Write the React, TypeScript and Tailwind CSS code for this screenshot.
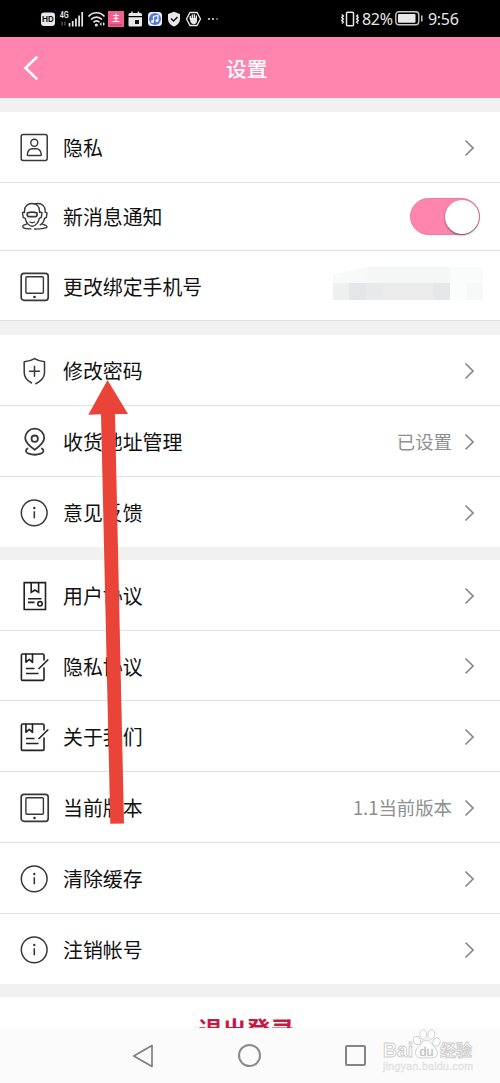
import type { ReactNode } from "react";

function Icon({ children }: { children: ReactNode }) {
  return (
    <svg
      viewBox="0 0 30 30"
      className="h-[30px] w-[30px] shrink-0 overflow-visible"
      fill="none"
      stroke="#383838"
      strokeWidth="1.4"
      strokeLinecap="round"
      strokeLinejoin="round"
    >
      {children}
    </svg>
  );
}

const PersonIcon = () => (
  <Icon>
    <rect x="2.2" y="2.6" width="26" height="26" rx="2" strokeWidth="1.5" />
    <circle cx="15.3" cy="10.8" r="3.5" />
    <path d="M9 23.5c-.6 0-.8-.4-.7-1 .5-3.300 2.500-5.700 5-5.700h4c2.500 0 4.500 2.400 5 5.700 .1.600-.1 1-.7 1z" />
  </Icon>
);

const FacesIcon = () => (
  <Icon>
    <g strokeWidth="1.4">
      <path d="M5.500 10.500V9C5.500 4.500 8.500 1.500 13 1.500S20.500 4.500 20.500 9v1.500" />
      <path d="M5.500 10 3.500 10.700 4.200 15.300 6.200 16.300C7 20.500 10 24.300 13.200 24.300S19.500 20.500 20.300 16.300L22.300 15.300 23 10.700 20.700 10" />
      <path d="M8.300 11c3-1.200 6.700-1.200 9.700 0v2c0 1-.7 1.600-1.700 1.600h-6.200c-1 0-1.800-.6-1.800-1.600z" strokeWidth="1.700" />
      <path d="M11 20c1.300.8 3.200.8 4.500 0" />
      <path d="M15.500 1.800c1-.3 2.200-.3 3.200-.3 4.500 0 7.500 3 7.500 7.500v1.300l1.800.6-.6 4.500-1.900 1c-.5 3-1.800 5.200-4.300 6.500" />
      <path d="M8 21.800l-3.200 1.300c-1 .5-1.300 1.700-.7 2.500 1.500 1 4 1.300 7.800 1.300" />
      <path d="M15.500 27c5 .3 9-.3 12.200-1.300.4-1-.2-2-1-2.300l-3.200-1.200" />
    </g>
  </Icon>
);

const TabletIcon = () => (
  <Icon>
    <rect x="2.200" y="2.300" width="27" height="27" rx="2.800" strokeWidth="1.700" />
    <rect x="6.900" y="5.800" width="17.500" height="16.400" rx="1" />
    <circle cx="15.500" cy="26" r="1.300" fill="#333" stroke="none" />
  </Icon>
);

const ShieldIcon = () => (
  <Icon>
    <path d="M12.500 28C7.500 25.200 5.200 22 5.200 17.500V6.800C9 6.500 12.500 5.500 15.600 3.600 18.700 5.500 22 6.500 25.500 6.800V17.500c0 4.700-3 8.500-8.700 11.200" strokeWidth="1.500" />
    <path d="M15.500 11.300v10M10.500 16.300h10" strokeWidth="1.500" />
  </Icon>
);

const PinIcon = () => (
  <Icon>
    <g strokeWidth="1.800">
      <path d="M15.700 23.800C10 19.700 6.200 16.500 6.200 12a9.500 9.300 0 0 1 19 0c0 4.500-3.800 7.700-9.500 11.800z" />
      <circle cx="15.700" cy="12.700" r="3.200" />
      <path d="M8.500 22.500c-2.500 1.800-2 4.200 1.200 5.200 3.600 1.200 8.600 1.200 12 0 3.200-1 3.700-3.400 1.200-5.200" />
    </g>
  </Icon>
);

const InfoIcon = () => (
  <Icon>
    <circle cx="15.200" cy="15.800" r="12.900" strokeWidth="1.500" />
    <path d="M15.300 14.300v7" strokeWidth="1.600" strokeLinecap="butt" />
    <circle cx="15.300" cy="11" r="1.200" fill="#383838" stroke="none" />
  </Icon>
);

const CertificateIcon = () => (
  <Icon>
    <g stroke="#222" strokeLinejoin="miter" strokeLinecap="butt" strokeWidth="1.600">
      <path d="M5.200 2.600h21.300v26.900H5.200z" />
      <path d="M12.200 2.600v9.800l3.700-2.400 3.700 2.400V2.600" />
      <path d="M9 18.800h13.500M9 22.400h6.500" />
      <circle cx="21" cy="23.800" r="2.200" />
    </g>
  </Icon>
);

const ContractIcon = () => (
  <Icon>
    <g stroke="#222" strokeWidth="1.600">
      <path d="M25 17v11.200a1.200 1.200 0 0 1-1.200 1.200H3.600a1.200 1.200 0 0 1-1.200-1.200V4.200A1.200 1.200 0 0 1 3.600 3h20.200A1.200 1.200 0 0 1 25 4.200V9" />
      <path d="M6.900 3v8.300l3.300-3 3.300 3V3" />
      <path d="M7 17.500h8.500M7 22.500h12.500M29.300 8.500 19.500 18" strokeLinecap="butt" />
    </g>
  </Icon>
);

const Chevron = () => (
  <svg viewBox="0 0 10 18" className="h-[18px] w-[10px] shrink-0" fill="none" stroke="#8a8a8a" strokeWidth="1.700">
    <path d="M1.500 1.500 9 9 1.500 16.500" />
  </svg>
);

const Toggle = () => (
  <div className="mr-5 flex h-[37px] w-[70px] items-center justify-end rounded-full border border-[#ee7ba4] bg-[#ff84ae]">
    <div className="h-[34px] w-[34px] rounded-full bg-white shadow-[0_1px_2px_rgba(80,30,50,0.7)]" />
  </div>
);

const MaskedNumber = () => (
  <div className="mr-[17px] flex flex-col pb-1">
    <div className="flex h-4">
      <div className="w-[34px] bg-[#f8f9f9] [clip-path:polygon(0_45%,100%_0,100%_100%,0_100%)]" />
      <div className="w-[83px] bg-[#f5f6f6]" />
      <div className="w-[33px] bg-[#fafbfb]" />
    </div>
    <div className="flex h-[17px]">
      <div className="w-4 bg-[#eeefef]" />
      <div className="w-[17px] bg-[#e5e6e8]" />
      <div className="w-[17px] bg-[#e8e9ea]" />
      <div className="w-[50px] bg-[#ebebec]" />
      <div className="w-[17px] bg-[#e6e7e9]" />
      <div className="w-[17px] bg-[#fbfcfc]" />
      <div className="w-4 bg-[#f7f8f8]" />
    </div>
  </div>
);

function Row({
  icon,
  label,
  value,
  children,
  size = "h-[71px]",
}: {
  icon: ReactNode;
  label: string;
  value?: string;
  children?: ReactNode;
  size?: string;
}) {
  return (
    <div className={`flex items-center border-b border-[#e2e2e2] bg-white pl-[19px] ${size}`}>
      {icon}
      <span className="ml-[14px] whitespace-nowrap pt-[2px] text-[19.900px] leading-[30px] text-[#111]">{label}</span>
      <div className="ml-auto flex items-center">
        {children ?? (
          <div className="flex items-center pr-[26px] pt-px">
            {value && <span className="mr-3 whitespace-nowrap pb-[2px] text-[18.400px] leading-7 text-[#8f8f8f]">{value}</span>}
            <Chevron />
          </div>
        )}
      </div>
    </div>
  );
}

function StatusBar() {
  return (
    <div className="flex h-[37px] items-center bg-black text-[#e8e8e8]">
      <svg viewBox="0 0 180 16" className="ml-10 h-4 w-[180px] shrink-0 overflow-visible" fill="none">
        <rect x="1" y="1.500" width="14" height="13.500" rx="3" fill="#e8e8e8" />
        <text x="8" y="11.300" textAnchor="middle" fontSize="8" fontWeight="700" fill="#111" fontFamily="Inter">HD</text>
        <text x="19.700" y="7.300" fontSize="9" fontWeight="600" fill="#e8e8e8" fontFamily="Roboto" textLength="9" lengthAdjust="spacingAndGlyphs">4G</text>
        <path d="M22 10.500v4M25 10.500v4" stroke="#777" strokeWidth="1" />
        <path d="M29.500 12v3.500M32.700 10v5.500M35.900 7.500v8M39.100 4.500v11M42.200 1v14.500" stroke="#e8e8e8" strokeWidth="1.700" />
        <path d="M48.500 5.500c4.500-5 11.500-5 16 0M51 8.500c3.300-3.300 7.700-3.300 11 0M53.500 11.300c2-2 4.200-2 6 0" stroke="#e8e8e8" strokeWidth="1.700" />
        <circle cx="56.300" cy="14" r="1.500" fill="#e8e8e8" />
        <path d="m61.500 11-2 2 2 2zM63 11l2 2-2 2z" fill="#e8e8e8" />
        <rect x="68" y="0" width="16" height="16" fill="#f25f91" />
        <path d="M73 4.500h6M73.500 7.300h5M72.500 10.500h7M76 2.500v8" stroke="#fff" strokeWidth="1" />
        <path d="M70 14h12" stroke="#b33861" strokeWidth="1" />
        <path d="M88.500 3.500A1.500 1.500 0 0 1 90 2h10.500A1.500 1.500 0 0 1 102 3.500V5H88.500zM88.500 6.200H102v8a1.300 1.300 0 0 1-1.300 1.300H89.800a1.300 1.300 0 0 1-1.300-1.300z" fill="#e8e8e8" />
        <path d="M92 .5V3M98.500.5V3" stroke="#e8e8e8" strokeWidth="1.500" />
        <rect x="95" y="9" width="4" height="4" fill="#111" />
        <rect x="108" y="1" width="14" height="14" rx="3.500" fill="#edf1fc" />
        <circle cx="115" cy="8" r="6" fill="#5577d5" />
        <path d="M113.500 10.500v-5l4.500-1v5" stroke="#fff" strokeWidth="1.200" />
        <circle cx="112.500" cy="10.700" r="1.400" fill="#fff" />
        <circle cx="117" cy="9.700" r="1.400" fill="#fff" />
        <path d="m134 .8 6 2.200v5c0 3.500-2.500 6-6 7.500-3.500-1.500-6-4-6-7.500V3z" fill="#e8e8e8" />
        <path d="m131 7.500 2.500 2.500 4-4" stroke="#111" strokeWidth="1.400" />
        <path d="M150 1.500h7l3.500 6.500-3.500 6.500h-7L146.500 8z" stroke="#e8e8e8" strokeWidth="1.300" />
        <path d="M150.300 8V5.500M152.300 8V4M154.300 8V3.800M156.300 8V5" stroke="#e8e8e8" strokeWidth="1.400" strokeLinecap="round" />
        <path d="M149.600 7h7.400v3c0 4-5.500 4-6.500 1z" fill="#e8e8e8" />
        <circle cx="169" cy="8" r="1.100" fill="#d8d8d8" />
        <circle cx="173" cy="8" r="1.100" fill="#d8d8d8" />
        <circle cx="177" cy="8" r=".8" fill="#d8d8d8" />
      </svg>
      <svg viewBox="0 0 18 16" className="ml-[121px] h-4 w-[18px] shrink-0" fill="none" stroke="#e8e8e8" strokeWidth="1.500">
        <rect x="5.500" y="1.200" width="7" height="13.600" rx="1" />
        <path d="m.8 3.500 1.500 1.500-1.500 1.500 1.500 1.500L.8 9.500 2.300 11 .8 12.500M17.200 3.500 15.700 5l1.500 1.500L15.700 8l1.500 1.500-1.500 1.500 1.500 1.500" />
      </svg>
      <span className="ml-[3px] w-[36px] whitespace-nowrap pt-px font-['Noto_Sans'] text-[16px] leading-5 tracking-[-0.300px]">82%</span>
      <svg viewBox="0 0 28 15" className="-ml-[3px] h-[15px] w-7 shrink-0" fill="none" stroke="#c8c8c8">
        <rect x=".8" y=".8" width="23" height="13" rx="3" strokeWidth="1.400" />
        <rect x="3" y="3" width="17.500" height="8.700" rx="1" fill="#e8e8e8" stroke="none" />
        <path d="M26.800 4.500v6" strokeWidth="1.500" />
      </svg>
      <span className="ml-[5px] whitespace-nowrap pt-px font-['Noto_Sans'] text-[16px] leading-5 tracking-[-0.300px]">9:56</span>
    </div>
  );
}

function Watermark() {
  return (
    <div className="absolute left-[382px] top-[1026px] h-[52px] w-[94px]">
      <svg viewBox="0 0 94 52" className="h-[52px] w-[94px]" fill="#fdfdfd" stroke="#cdcdcd" strokeWidth=".9">
        <ellipse cx="35" cy="14.500" rx="3.500" ry="4.300" transform="rotate(-20 35 14.500)" />
        <ellipse cx="41.200" cy="8.500" rx="3.500" ry="4.700" />
        <ellipse cx="49.300" cy="8.500" rx="3.500" ry="4.700" transform="rotate(10 49.300 8.500)" />
        <ellipse cx="54.500" cy="16" rx="3.500" ry="4.300" transform="rotate(25 54.500 16)" />
        <path d="M38.500 18c3-5 9-5 11.500 0 1.500 2.700 5.500 4.500 5.500 8.500 0 7-7 5.300-11 5.300s-11 1.700-11-5.300c0-4 3.500-5.800 5-8.500z" />
        <text x="1" y="31" fontSize="20" fontWeight="700" textLength="30" lengthAdjust="spacingAndGlyphs" fontFamily="Liberation Sans">Bai</text>
        <text x="44.500" y="29.500" fontSize="12.500" fontWeight="400" textAnchor="middle" fontFamily="Liberation Sans" strokeWidth=".3" fill="#b8b8b8">du</text>
        <text x="58" y="30" fontSize="16" fontWeight="700" textLength="32" fontFamily="Noto Sans CJK SC">经验</text>
        <text x="1" y="43.500" fontSize="10.500" textLength="90" fontFamily="Liberation Sans" strokeWidth=".4" stroke="#dcdcdc" fill="#eeeeee">jingyan.baidu.com</text>
      </svg>
    </div>
  );
}

export default function App() {
  return (
    <div className="relative flex h-[1083px] w-[500px] flex-col overflow-hidden bg-[#f1f1f1] font-['Noto_Sans_CJK_SC',sans-serif]">
      <StatusBar />
      <header className="flex h-[61px] shrink-0 items-center bg-[#ff84ae] text-white">
        <svg viewBox="0 0 16 26" className="ml-[23px] h-[26px] w-4" fill="none" stroke="white" strokeWidth="2.600">
          <path d="M14.200 1.800 2.500 13l11.700 11.200" />
        </svg>
        <h1 className="ml-[187px] text-[20.700px] font-medium leading-8">设置</h1>
      </header>

      <section className="mt-[14px] shrink-0">
        <Row icon={<PersonIcon />} label="隐私" />
        <Row icon={<FacesIcon />} label="新消息通知" size="h-[68px] [&>span]:pt-0">
          <Toggle />
        </Row>
        <Row icon={<TabletIcon />} label="更改绑定手机号" size="h-[70px]">
          <MaskedNumber />
        </Row>
      </section>

      <section className="mt-[14px] shrink-0">
        <Row icon={<ShieldIcon />} label="修改密码" />
        <Row icon={<PinIcon />} label="收货地址管理" value="已设置" />
        <Row icon={<InfoIcon />} label="意见反馈" size="h-[70px] pt-px border-b-white" />
      </section>

      <section className="mt-[13px] shrink-0">
        <Row icon={<CertificateIcon />} label="用户协议" />
        <Row icon={<ContractIcon />} label="隐私协议" size="h-[70px]" />
        <Row icon={<ContractIcon />} label="关于我们" />
        <Row icon={<TabletIcon />} label="当前版本" value="1.1当前版本" />
        <Row icon={<InfoIcon />} label="清除缓存" />
        <Row icon={<InfoIcon />} label="注销帐号" size="h-[70px] pt-px border-b-white" />
      </section>

      <button className="mt-[13px] flex h-[31px] shrink-0 items-start justify-center overflow-hidden bg-white pr-[7px] pt-[14px] text-[24px] font-bold leading-9 text-[#c9193f]">
        退出登录
      </button>

      <nav className="flex h-[55px] shrink-0 items-center bg-[#fbfbfb]">
        <svg viewBox="0 0 22 24" className="ml-[132px] h-6 w-[22px]" fill="none" stroke="#808080" strokeWidth="1.700" strokeLinejoin="round">
          <path d="M20 1.500v21L1.800 12z" />
        </svg>
        <div className="ml-[84px] h-[23px] w-[23px] rounded-full border-2 border-[#8a8a8a]" />
        <div className="ml-[84px] h-[21px] w-[21px] rounded-[2px] border-2 border-[#858585]" />
      </nav>

      <svg viewBox="0 0 42 446" className="absolute left-[87px] top-[379px] h-[446px] w-[42px]" fill="#e94437">
        <path d="M20.500 1 41 35H28l9 409.500-13.700.300L14 35.300 1.300 35.800z" />
      </svg>
      <Watermark />
    </div>
  );
}
